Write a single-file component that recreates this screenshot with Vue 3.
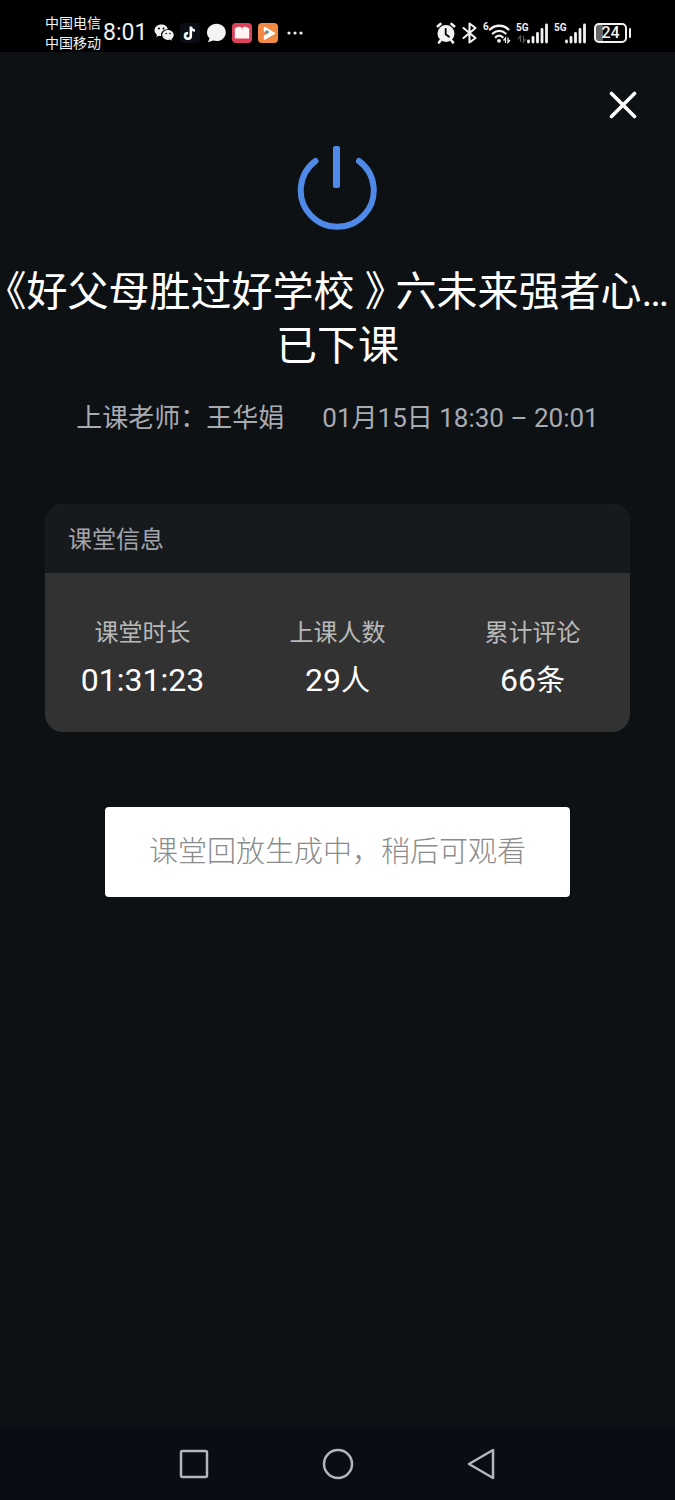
<template>
  <div class="screen">
    <header class="status-bar">
      <div class="carriers">
        <span v-for="c in carriers" :key="c">{{ c }}</span>
      </div>
      <time class="clock">8:01</time>
      <div class="notifications">
        <svg class="app-icon" viewBox="0 0 20 20">
          <path fill="#f2f2f2" d="M7.500 1.500C3.600 1.500.5 4.100.5 7.300c0 1.800 1 3.400 2.500 4.500L2.400 14l2.500-1.300c.8.2 1.500.4 2.300.4-.9-3.900 2.300-6.900 6.700-6.800C13.300 3.500 10.700 1.500 7.500 1.500z" />
          <path fill="#f2f2f2" d="M19.700 12c0-2.700-2.600-4.900-5.700-4.900S8.300 9.300 8.300 12s2.500 4.900 5.700 4.900c.7 0 1.400-.1 2-.3l2 1.100-.5-1.800c1.300-.9 2.200-2.300 2.200-3.900z" />
          <g fill="#000">
            <circle cx="5" cy="5.600" r="1" /><circle cx="9.500" cy="5.600" r="1" />
            <circle cx="12.200" cy="10.500" r=".8" /><circle cx="16" cy="10.500" r=".8" />
          </g>
        </svg>
        <svg class="app-icon" viewBox="0 0 20 20">
          <rect width="20" height="20" rx="4" fill="#0b0e16" />
          <path fill="none" stroke="#56d8dc" stroke-width="2.200" d="M10.500 3.500v9.300a2.900 2.900 0 1 1-2.900-2.900M10.500 4.200c.5 2 2 3.200 4 3.300" />
          <path fill="none" stroke="#fff" stroke-width="2.200" d="M11 3.800V13a2.900 2.900 0 1 1-2.900-2.900M11 4c.5 2.200 2 3.500 4 3.600" />
        </svg>
        <svg class="app-icon" viewBox="0 0 20 20">
          <path fill="#f4f4f4" d="M10.500.8C5.300.8 1 4.600 1 9.500c0 2.400 1 4.300 2.500 5.800L2 19.200l5.200-1.600c1 .3 2.100.5 3.300.5 5.200 0 9.300-3.800 9.300-8.600S15.700.8 10.500.8z" />
        </svg>
        <svg class="app-icon" viewBox="0 0 20 20">
          <rect width="20" height="20" rx="4" fill="#dc4259" />
          <path fill="#fff5f3" d="M2.800 5.500 5 4.200c2-.7 3.700-.3 5 .8 1.300-1.100 3-1.500 5-.8l2.200 1.300v10H2.800z" />
          <path stroke="#f3b3b5" d="M10 5v2" />
        </svg>
        <svg class="app-icon" viewBox="0 0 20 20">
          <rect width="20" height="20" rx="4" fill="#f08a45" />
          <path fill="#fff" stroke="#fff" stroke-width="1.500" stroke-linejoin="round" d="m6.500 4.500 10 5.800L6.500 16z" />
          <path fill="#f08a45" d="M5 8v5l5-2.500z" />
          <circle cx="9" cy="9" r="1.800" fill="#5a8ca3" />
        </svg>
        <svg class="app-icon" viewBox="0 0 20 20" fill="#eee">
          <circle cx="5" cy="10" r="1.600" /><circle cx="11" cy="10" r="1.600" /><circle cx="17" cy="10" r="1.600" />
        </svg>
      </div>

      <div class="system">
        <svg width="20" height="22" viewBox="0 0 20 22">
          <circle cx="10" cy="11.500" r="8.500" fill="#f2f2f2" />
          <path stroke="#f2f2f2" stroke-width="2.600" stroke-linecap="round" d="M1.800 4.200 4.500 2M18.200 4.200 15.500 2M4.500 18.500l-1.500 2M15.500 18.500l1.500 2" />
          <path fill="none" stroke="#000" stroke-width="1.800" stroke-linecap="round" d="M9.700 6.800v5.400l3.300 2.600" />
        </svg>
        <svg width="17" height="22" viewBox="0 0 17 22">
          <path fill="none" stroke="#f2f2f2" stroke-width="2.100" stroke-linejoin="round" stroke-linecap="round" d="m2.500 6 12 10L8.500 20.500v-19l6 4.500-12 10" />
        </svg>
        <svg width="28" height="22" viewBox="0 0 28 22">
          <text class="badge" x="0" y="8">6</text>
          <g fill="none" stroke="#f2f2f2" stroke-width="2.300" stroke-linecap="round">
            <path d="M7 7.500c5-5 13.500-5 18.500 0" />
            <path d="M9.800 11.500c3.700-3.500 9.200-3.500 12.800 0" />
            <path d="M12.800 15.200c2-1.800 4.800-1.800 6.800 0" />
          </g>
          <circle cx="16" cy="18.800" r="1.900" fill="#f2f2f2" />
          <path fill="none" stroke="#f2f2f2" stroke-width="1.300" d="M22.500 21v-5l-2 2.500M25 15.500v5l2-2.500" />
        </svg>
        <svg v-for="n in 2" :key="n" width="33" height="22" viewBox="0 0 33 22">
          <text class="badge" x="0" y="9">5G</text>
          <path v-if="n === 1" fill="none" stroke="#555" stroke-width="1.300" d="M4.500 20v-6l-2.500 3M7.500 14v6l2-3" />
          <path stroke="#f2f2f2" stroke-width="2.800" stroke-linecap="round" d="M12.500 19v1M17 15.500V20M21.500 11.500V20M26 7.500V20M30.500 3v17" />
        </svg>
        <div class="battery">
          <span class="battery-level">24</span>
        </div>
      </div>
    </header>

    <main class="content">
      <div class="toolbar">
        <button class="icon-btn" aria-label="关闭">
          <svg width="28" height="28" viewBox="0 0 28 28">
            <path stroke="#fff" stroke-width="3.600" stroke-linecap="round" d="m2.500 2.500 23 23M25.500 2.500l-23 23" />
          </svg>
        </button>
      </div>

      <svg class="power" viewBox="0 0 82 86">
        <path fill="none" stroke="#4f8ae8" stroke-width="6" stroke-linecap="round" d="M18.500 16A36.500 36.500 0 1 0 62 16" />
        <rect x="36" y="1" width="7" height="42" rx="2" fill="#4f8ae8" />
      </svg>

      <h1 class="title">
        <span class="course">《好父母胜过好学校 》 六未来强者心…</span>
        <span>已下课</span>
      </h1>

      <p class="meta">
        <span>上课老师：王华娟</span>
        <span>01月15日 18:30 – 20:01</span>
      </p>

      <section class="card">
        <h2 class="card-title">课堂信息</h2>
        <dl class="stats">
          <div v-for="s in stats" :key="s.label" class="stat">
            <dt>{{ s.label }}</dt>
            <dd>{{ s.value }}<span class="unit">{{ s.unit }}</span></dd>
          </div>
        </dl>
      </section>

      <button class="replay-btn" disabled>课堂回放生成中，稍后可观看</button>
    </main>

    <nav class="nav-bar">
      <button class="icon-btn" aria-label="最近任务">
        <svg width="32" height="32" viewBox="0 0 32 32">
          <rect x="3" y="3" width="26" height="26" rx="1.500" />
        </svg>
      </button>
      <button class="icon-btn" aria-label="主屏幕">
        <svg width="32" height="32" viewBox="0 0 32 32">
          <circle cx="16" cy="16" r="14" />
        </svg>
      </button>
      <button class="icon-btn" aria-label="返回">
        <svg width="32" height="32" viewBox="0 0 32 32">
          <path d="M3 16 27 2v28z" />
        </svg>
      </button>
    </nav>
  </div>
</template>

<script setup>
const carriers = ['中国电信', '中国移动']

const stats = [
  { label: '课堂时长', value: '01:31:23', unit: '' },
  { label: '上课人数', value: '29', unit: '人' },
  { label: '累计评论', value: '66', unit: '条' }
]
</script>

<style>
body {
  margin: 0;
  background: #0d1114;
}
</style>

<style scoped>
.screen {
  display: flex;
  flex-direction: column;
  min-height: 100vh;
  background: #0d1114;
  color: #fff;
  font-family: Roboto, "Noto Sans CJK SC", sans-serif;
}

.status-bar {
  display: flex;
  align-items: center;
  box-sizing: border-box;
  height: 52px;
  padding: 13px 44px 0 45px;
  background: #000;
  color: #f2f2f2;
}

.carriers {
  display: flex;
  flex-direction: column;
  font-size: 14px;
  line-height: 20px;
}

.clock {
  margin-left: 2px;
  font-size: 23px;
  line-height: 28px;
}

.notifications {
  display: flex;
  align-items: center;
  gap: 6px;
  margin-left: 7px;
}

.app-icon {
  width: 20px;
  height: 20px;
}

.system {
  display: flex;
  align-items: center;
  gap: 5px;
  margin-left: auto;
}

.badge {
  fill: #f2f2f2;
  font-size: 10px;
  font-weight: 700;
}

.battery {
  display: flex;
  align-items: center;
  gap: 2px;
  margin-left: 2px;
}

.battery::after {
  content: "";
  width: 2px;
  height: 10px;
  border-radius: 1px;
  background: #f2f2f2;
}

.battery-level {
  box-sizing: border-box;
  width: 33px;
  border: 2px solid #f2f2f2;
  border-radius: 5px;
  background: linear-gradient(to right, #666 24%, transparent 24%);
  font-size: 16px;
  font-weight: 500;
  line-height: 16px;
  text-align: center;
}

.content {
  display: flex;
  flex: 1;
  flex-direction: column;
  align-items: center;
}

.toolbar {
  display: flex;
  align-self: stretch;
  justify-content: flex-end;
  padding: 39px 38px 0;
}

.icon-btn {
  display: flex;
  padding: 0;
  border: none;
  background: none;
  cursor: pointer;
}

.power {
  width: 82px;
  height: 86px;
  margin-top: 26px;
}

.title {
  display: flex;
  flex-direction: column;
  align-items: center;
  align-self: stretch;
  margin: 34px 0 0;
  font-size: 41px;
  font-weight: 400;
  line-height: 54px;
}

.course {
  font-feature-settings: "halt";
  white-space: nowrap;
}

.meta {
  display: flex;
  gap: 38px;
  margin: 27px 0 0;
  color: #a9abb3;
  font-size: 26px;
  line-height: 36px;
  white-space: nowrap;
}

.card {
  align-self: stretch;
  margin: 68px 45px 0;
  overflow: hidden;
  border-radius: 18px;
  background: #323232;
}

.card-title {
  margin: 0;
  padding: 3px 23px 0;
  background: #161a1d;
  color: #a2a5ac;
  font-size: 24px;
  font-weight: 400;
  line-height: 66px;
}

.stats {
  display: grid;
  grid-template-columns: repeat(3, 1fr);
  margin: 0;
  padding: 43px 0 32px;
  text-align: center;
}

.stat {
  display: flex;
  flex-direction: column;
  gap: 10px;
}

.stat dt {
  color: #b9b9b9;
  font-size: 24px;
  line-height: 34px;
}

.stat dd {
  margin: 0;
  font-size: 32px;
  line-height: 40px;
}

.unit {
  font-size: 29px;
  line-height: 32px;
}

.replay-btn {
  margin-top: 75px;
  padding: 0 44px;
  border: none;
  border-radius: 4px;
  background: #fff;
  color: #8c8c8c;
  font-family: inherit;
  font-size: 29px;
  font-weight: 300;
  line-height: 90px;
}

.nav-bar {
  display: flex;
  align-items: center;
  justify-content: center;
  gap: 112px;
  height: 72px;
  background: #0a0d14;
}

.nav-bar svg {
  fill: none;
  stroke: #b4b6ba;
  stroke-width: 2.500;
  stroke-linejoin: round;
}
</style>
